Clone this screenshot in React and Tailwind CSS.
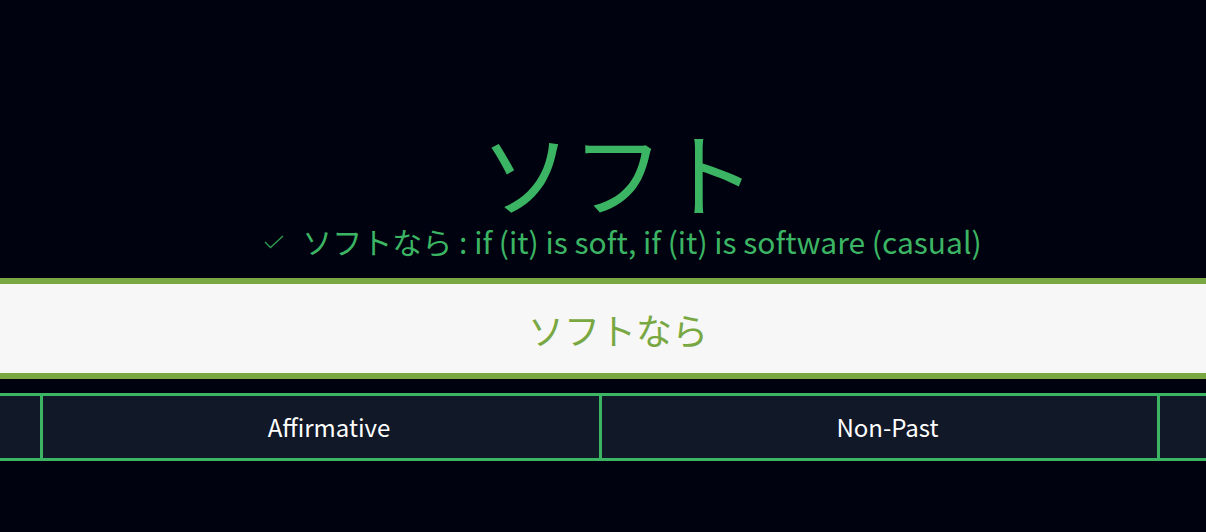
import React from 'react';

const font = { fontFamily: '"Noto Sans CJK JP", "Noto Sans", sans-serif' };

export default function App() {
  return (
    <div className="min-h-screen w-full overflow-hidden bg-[#00020f]" style={font}>
      <div className="flex flex-col items-center pt-[124px] pl-[30px]">
        <h1 className="text-[92px] leading-none font-normal text-[#3bb563]">ソフト</h1>
        <div className="mt-[10px] flex items-center gap-[18px] pl-[10px] text-[30px] leading-none text-[#3bb563]">
          <svg width="20" height="14" viewBox="0 0 20 14" fill="none" className="mt-[2px]">
            <path d="M1 7 L6.5 12.5 L19 1" stroke="#2f9a52" strokeWidth="1.4" />
          </svg>
          <span>ソフトなら : if (it) is soft, if (it) is software (casual)</span>
        </div>
      </div>

      <div className="mt-[22px] flex h-[101px] w-full items-center justify-center border-y-[6px] border-[#79a843] bg-[#f7f7f7] pl-[30px]">
        <span className="text-[36px] text-[#79a843]">ソフトなら</span>
      </div>

      <div className="mt-[14px] flex h-[68px] w-full border-y-[3px] border-[#3bb563] bg-[#111827] text-[24px] text-white">
        <div className="w-[43px] shrink-0 border-r-[3px] border-[#3bb563]"></div>
        <div className="flex w-[559px] shrink-0 items-center justify-center border-r-[3px] border-[#3bb563] pl-[16px]">
          Affirmative
        </div>
        <div className="flex w-[558px] shrink-0 items-center justify-center border-r-[3px] border-[#3bb563] pl-[16px]">
          Non-Past
        </div>
        <div className="flex-1"></div>
      </div>
    </div>
  );
}
